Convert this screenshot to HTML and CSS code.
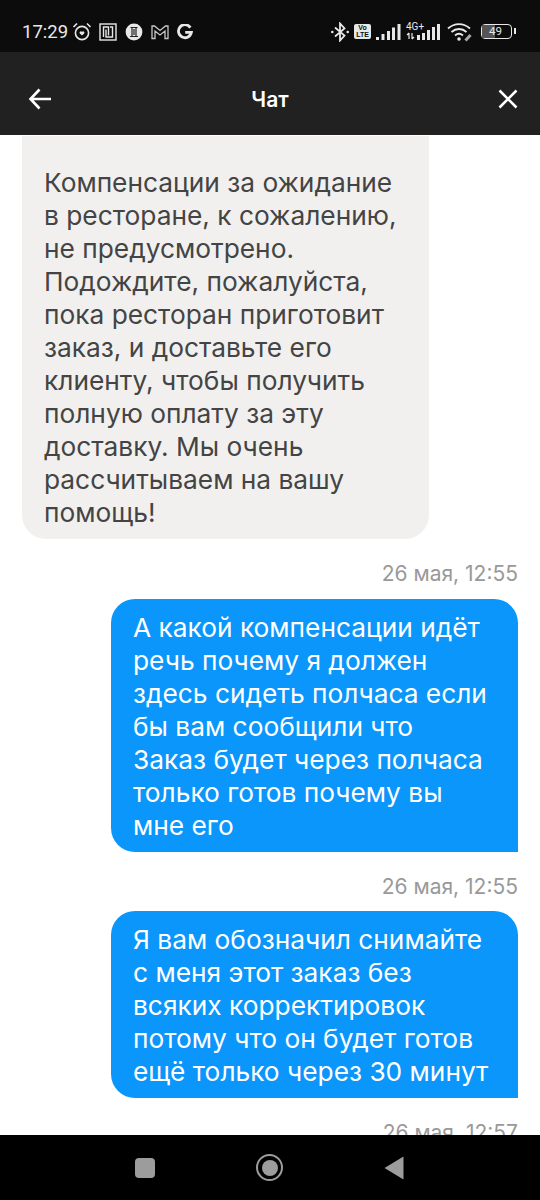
FILE: index.html
```html
<!DOCTYPE html>
<html lang="ru">
<head>
	<meta charset="UTF-8">
	<meta name="viewport" content="width=device-width,initial-scale=1.0">
	<title>Чат</title>
	<link rel="stylesheet" href="styles.css">
</head>
<body>
	<div class="screen">
		<!-- status bar -->
		<div class="status-bar">
			<div class="status-left">
				<span class="clock">17:29</span>
				<svg class="ic-alarm" width="20" height="20" viewBox="0 0 20 20" fill="none" stroke="#e8e8e8" stroke-width="1.6"><circle cx="10" cy="11" r="6.6"/><path d="M1.5 5 5 1.5M18.5 5 15 1.5"/><path d="M10 13.6 7.8 11.4a1.3 1.3 0 0 1 2.2-1.4 1.3 1.3 0 0 1 2.2 1.4z" fill="#e8e8e8" stroke="none"/></svg>
				<svg class="ic-nfc" width="18" height="18" viewBox="0 0 18 18" fill="none" stroke="#e8e8e8" stroke-width="1.4"><rect x="1" y="1" width="16" height="16"/><path d="M4.500 14V4h5v8.500M7 6.500V14h6.500V4H11"/></svg>
				<svg class="ic-app" width="18" height="18" viewBox="0 0 18 18"><circle cx="9" cy="9" r="8.4" fill="#e8e8e8"/><path d="M5.500 4.500h7M5 13.500h8M7 5v8M11 5v8M9 6v6" stroke="#222" stroke-width="1.2" fill="none"/></svg>
				<svg class="ic-mail" width="18" height="16" viewBox="0 0 18 16" fill="none" stroke="#c8c8c8" stroke-width="1.3"><path d="M1 14.500V2h2.500L9 6.500 14.500 2H17v12.500h-3V7L9 11 4 7v7.500z"/></svg>
				<svg class="ic-g" width="16" height="16" viewBox="0 0 16 16" fill="none" stroke="#e8e8e8" stroke-width="2.800"><path d="M13.400 3.600A6.500 6.500 0 1 0 14.400 8.300H8.200"/></svg>
			</div>
			<div class="status-right">
				<svg class="ic-bt" width="18" height="20" viewBox="0 0 18 20" fill="none" stroke="#e8e8e8" stroke-width="1.800"><path d="M4 5.500 13.500 13.500 9 18.500V1.500l4.500 5L4 14.500"/><circle cx="1.300" cy="10" r="1.300" fill="#e8e8e8" stroke="none"/><circle cx="16.700" cy="10" r="1.300" fill="#e8e8e8" stroke="none"/></svg>
				<span class="volte">Vo<br>LTE</span>
				<svg class="bars" width="25" height="16" viewBox="0 0 25 16" fill="#e8e8e8"><rect x="0" y="13" width="3" height="3"/><rect x="5.500" y="10" width="3" height="6"/><rect x="11" y="7" width="3" height="9"/><rect x="16" y="3.500" width="3" height="12.500"/><rect x="21.500" y="0" width="3" height="16"/></svg>
				<span class="net">
					<span class="net-label">4G+</span>
					<svg width="34" height="16" viewBox="0 0 34 16" fill="#e8e8e8"><path d="M3 9v6M1 11l2-2M6 15V9M8 13l-2 2" stroke="#e8e8e8" stroke-width="1.200" fill="none"/><rect x="11" y="11" width="3" height="5"/><rect x="16" y="9" width="3" height="7"/><rect x="21" y="6" width="3" height="10"/><rect x="26" y="3" width="3" height="13"/><rect x="31" y="0" width="3" height="16"/></svg>
				</span>
				<svg class="wifi" width="26" height="20" viewBox="0 0 26 20" fill="none" stroke="#e8e8e8" stroke-width="1.900"><path d="M1 6.500C7.500 .6 16.500 .6 23 6.500M4.500 10c4.500-4 10.500-4 15 0M8 13.400c2.600-2.100 5.400-2.100 8 0"/><circle cx="12" cy="17" r="1.800" fill="#e8e8e8" stroke="none"/><path d="M18.500 18.500l5-5.500" stroke="#a8a8a8" stroke-width="3"/></svg>
				<span class="battery"><span class="battery-level"></span><span class="battery-num">49</span></span>
			</div>
		</div>

		<!-- header -->
		<div class="top-bar">
			<svg class="top-back" width="24" height="22" viewBox="0 0 24 22" fill="none" stroke="#fff" stroke-width="2.600"><path d="M23 11H2.500M11.500 1.500 2.500 11l9 9.500"/></svg>
			<span class="top-title">Чат</span>
			<svg class="top-close" width="20" height="20" viewBox="0 0 20 20" fill="none" stroke="#fff" stroke-width="2.600"><path d="M1.500 1.500l17 17M18.500 1.500l-17 17"/></svg>
		</div>

		<!-- messages -->
		<div class="chat">
			<div class="msg msg-in">Компенсации за ожидание<br>в ресторане, к сожалению,<br>не предусмотрено.<br>Подождите, пожалуйста,<br>пока ресторан приготовит<br>заказ, и доставьте его<br>клиенту, чтобы получить<br>полную оплату за эту<br>доставку. Мы очень<br>рассчитываем на вашу<br>помощь!</div>
			<div class="msg-time">26 мая, 12:55</div>
			<div class="msg msg-out">А какой компенсации идёт<br>речь почему я должен<br>здесь сидеть полчаса если<br>бы вам сообщили что<br>Заказ будет через полчаса<br>только готов почему вы<br>мне его</div>
			<div class="msg-time">26 мая, 12:55</div>
			<div class="msg msg-out">Я вам обозначил снимайте<br>с меня этот заказ без<br>всяких корректировок<br>потому что он будет готов<br>ещё только через 30 минут</div>
			<div class="msg-time">26 мая, 12:57</div>
		</div>

		<!-- android nav -->
		<div class="nav-bar">
			<span class="nav-square"></span>
			<span class="nav-home"><span class="nav-dot"></span></span>
			<svg width="20" height="24" viewBox="0 0 20 24" fill="#9c9c9c"><path d="M19.500 .5v23L.5 12z"/></svg>
		</div>
	</div>
</body>
</html>
```

FILE: styles.css
```css
*{
	box-sizing: border-box;
}
body{
	margin: 0;
	background-color: #fff;
	font-family: "Inter", "Noto Sans", sans-serif;
}
.screen{
	width: 540px;
	height: 1200px;
	display: flex;
	flex-direction: column;
	overflow: hidden;
}
.status-bar{
	height: 52px;
	flex: none;
	background-color: #0c0c0c;
	color: #e8e8e8;
	display: flex;
	justify-content: space-between;
	align-items: center;
	padding: 11px 24px 0 22px;
}
.status-left,.status-right{
	display: flex;
	align-items: center;
}
.status-left svg{
	margin-left: 8px;
}
.status-left .ic-alarm{
	margin-left: 4px;
}
.status-left .ic-nfc{
	margin-left: 7px;
}
.clock{
	font-family: "Roboto", sans-serif;
	font-size: 18.500px;
}
.status-right{
	gap: 5px;
}
.volte{
	width: 17px;
	height: 15px;
	background-color: #e8e8e8;
	border-radius: 2px;
	color: #111;
	font-family: "Liberation Sans", sans-serif;
	font-size: 7px;
	font-weight: bold;
	line-height: 7px;
	text-align: center;
}
.net{
	position: relative;
	display: flex;
	width: 34px;
	height: 16px;
}
.net-label{
	position: absolute;
	left: 0;
	top: -2px;
	font-family: "Roboto", sans-serif;
	font-size: 10px;
	line-height: 10px;
}
.wifi{
	margin-left: 2px;
}
.battery{
	position: relative;
	width: 31px;
	height: 15px;
	margin-left: 3px;
	margin-right: 4px;
	border: 1.500px solid #e8e8e8;
	border-radius: 4px;
	display: flex;
}
.battery::after{
	content: "";
	position: absolute;
	right: -5px;
	top: 3px;
	width: 2px;
	height: 6px;
	background-color: #e8e8e8;
}
.battery-level{
	width: 13px;
	background-color: #555;
}
.battery-num{
	position: absolute;
	left: 7px;
	top: -1px;
	font-family: "Roboto", sans-serif;
	font-size: 11.500px;
	line-height: 15px;
}
.top-bar{
	height: 83px;
	flex: none;
	background-color: #212121;
	display: grid;
	grid-template-columns: 1fr auto 1fr;
	align-items: center;
	padding: 11px 22px 0;
}
.top-back{
	margin-left: 6px;
}
.top-close{
	justify-self: end;
}
.top-title{
	color: #fff;
	font-size: 21px;
	font-weight: 600;
}
.chat{
	flex: 1;
	min-height: 0;
	overflow: hidden;
	display: flex;
	flex-direction: column;
	padding: 1px 22px 0;
}
.msg{
	width: 407px;
	padding: 12px 22px 10px;
	font-size: 26.300px;
	line-height: 33px;
	white-space: nowrap;
}
.msg-in{
	padding-top: 30px;
	background-color: #f1f0ef;
	color: #444;
	border-radius: 0 0 24px 24px;
}
.msg-out{
	align-self: flex-end;
	background-color: #0a96fb;
	color: #fff;
	border-radius: 24px 24px 0 24px;
}
.msg-time{
	align-self: flex-end;
	color: #999;
	font-size: 21px;
	line-height: 24px;
	margin: 23px 0 12.500px;
}
.nav-bar{
	height: 65px;
	flex: none;
	background-color: #000;
	display: flex;
	align-items: center;
	padding: 0 136px 0 135px;
	justify-content: space-between;
}
.nav-square{
	width: 20px;
	height: 20px;
	background-color: #9c9c9c;
	border-radius: 4px;
}
.nav-home{
	width: 27px;
	height: 27px;
	border: 2.500px solid #9c9c9c;
	border-radius: 50%;
	display: flex;
	align-items: center;
	justify-content: center;
}
.nav-dot{
	width: 16px;
	height: 16px;
	border-radius: 50%;
	background-color: #9c9c9c;
}
```
